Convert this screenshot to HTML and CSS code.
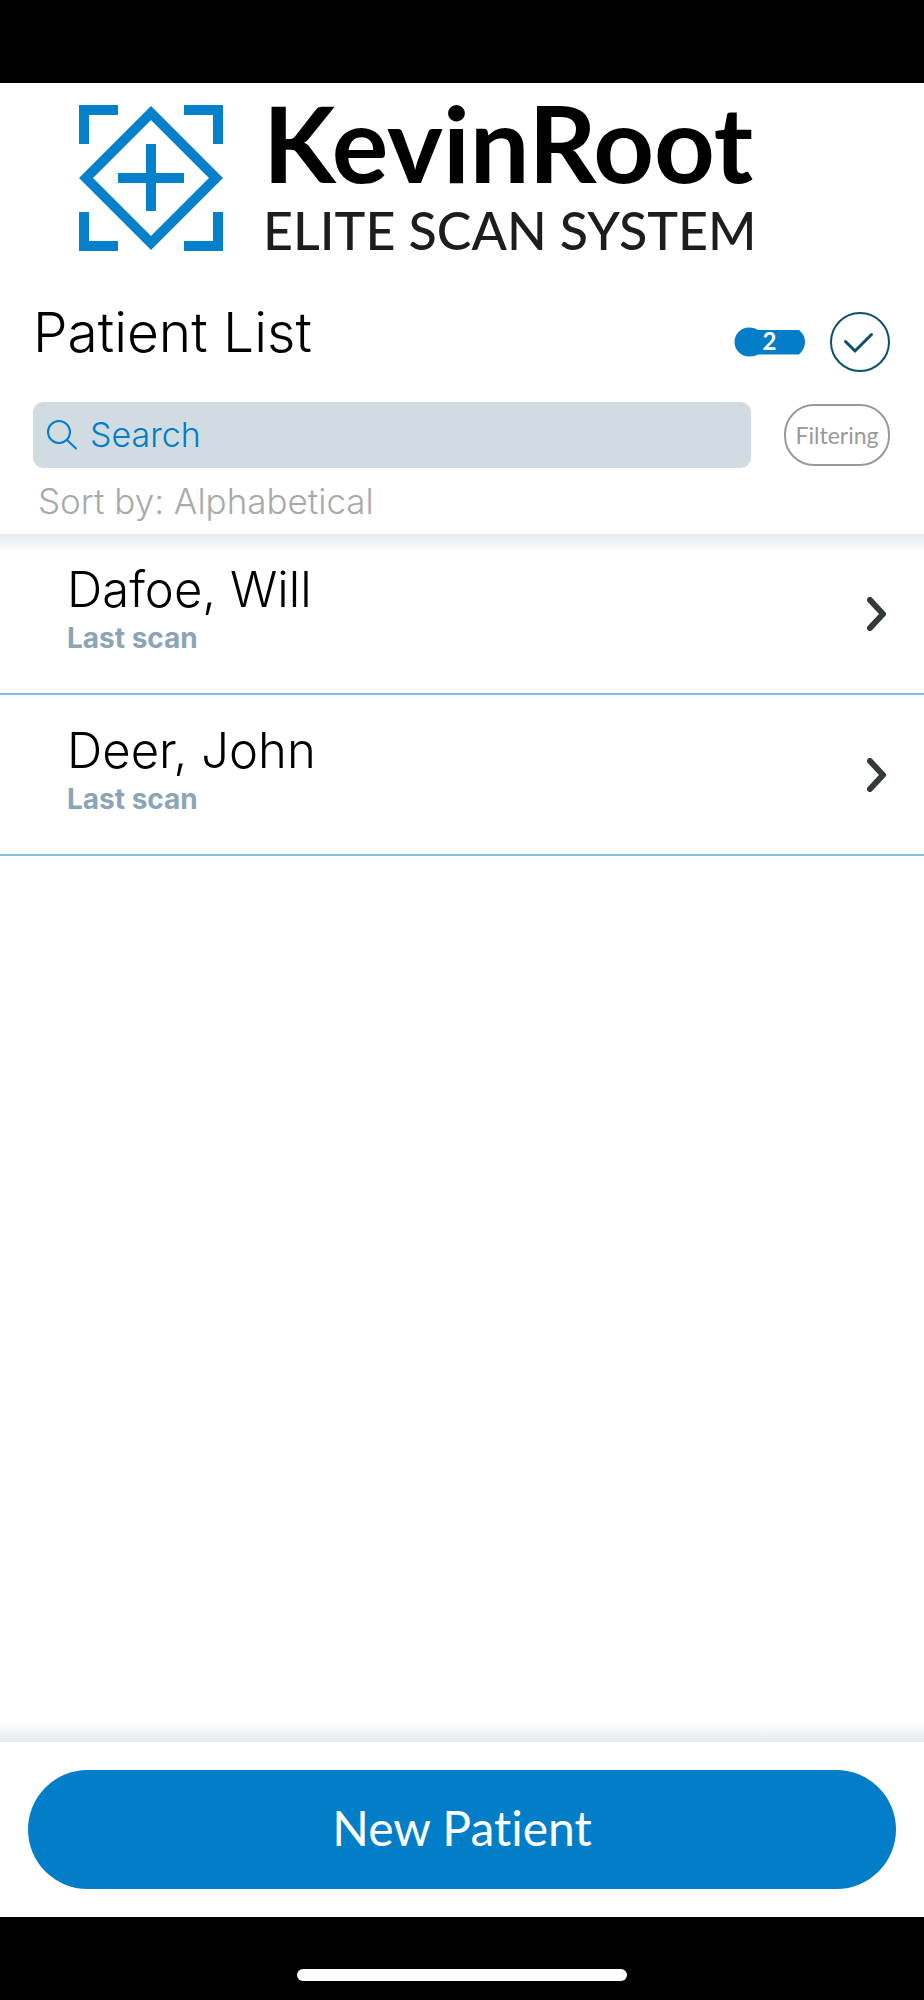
FILE: index.html
```html
<!DOCTYPE html>
<html lang="en">
<head>
<meta charset="utf-8">
<meta name="viewport" content="width=device-width, initial-scale=1">
<title>Patient List</title>
<link rel="stylesheet" href="styles.css">
</head>
<body>
<div class="status-bar"></div>
<header class="header">
  <div class="brand">
    <svg class="brand-mark" viewBox="0 0 144 146" aria-hidden="true">
      <g fill="none" stroke="#0580ca">
        <path stroke-width="10" d="M5 39V5H39M105 5H139V39M5 107V141H39M105 141H139V107M72 39V106M39 73H105"/>
        <path stroke-width="10" d="M72 8L137 73L72 138L7 73Z"/>
      </g>
    </svg>
    <div class="brand-text">
      <span class="brand-name">KevinRoot</span>
      <span class="brand-tag">ELITE SCAN SYSTEM</span>
    </div>
  </div>
  <div class="title-row">
    <h1 class="title">Patient List</h1>
    <div class="badge">
      <svg class="badge-shape" viewBox="0 0 71 30" aria-hidden="true">
        <path fill="#027dc7" d="M15 0.5C19 0.5 22 1.500 24 3H65Q71 8 71 15Q71 22 65 27.500H24C22 28.500 19 29.500 15 29.500A14.500 14.500 0 0 1 15 0.500Z"/>
      </svg>
      <span class="badge-count">2</span>
    </div>
    <button class="check" type="button" aria-label="Select patients">
      <svg viewBox="0 0 60 60" aria-hidden="true">
        <g fill="none" stroke="#0b4f6e" stroke-linecap="round">
          <circle cx="30" cy="30" r="29" stroke-width="2"/>
          <path stroke-width="3" d="M15.500 29.500L25 39L41.500 22.500"/>
        </g>
      </svg>
    </button>
  </div>
  <div class="search-row">
    <label class="search">
      <svg class="search-icon" viewBox="0 0 30 30" fill="none" stroke="#027dc7" stroke-width="2" stroke-linecap="round" aria-hidden="true">
        <circle cx="12" cy="12" r="11"/>
        <path d="M20 20L29 28.500"/>
      </svg>
      <input class="search-input" type="text" placeholder="Search" aria-label="Search">
    </label>
    <button class="filter" type="button">Filtering</button>
  </div>
  <div class="sort">Sort by: Alphabetical</div>
</header>
<main class="list">
  <a class="patient" href="#dafoe">
    <span class="patient-text">
      <span class="patient-name">Dafoe, Will</span>
      <span class="patient-scan">Last scan</span>
    </span>
    <svg class="chevron" viewBox="0 0 20 34" aria-hidden="true"><path d="M3 3L16 17L3 31"/></svg>
  </a>
  <a class="patient" href="#deer">
    <span class="patient-text">
      <span class="patient-name">Deer, John</span>
      <span class="patient-scan">Last scan</span>
    </span>
    <svg class="chevron" viewBox="0 0 20 34" aria-hidden="true"><path d="M3 3L16 17L3 31"/></svg>
  </a>
</main>
<footer class="footer">
  <button class="new-patient" type="button">New Patient</button>
</footer>
<div class="home-area"><div class="home-bar"></div></div>
</body>
</html>
```

FILE: styles.css
```css
* { box-sizing: border-box; }
body {
  margin: 0;
  min-height: 100vh;
  display: flex;
  flex-direction: column;
  background: #fff;
  color: #000;
  font-family: Inter, "Liberation Sans", sans-serif;
  font-weight: 300;
}
button { margin: 0; padding: 0; border: 0; background: none; cursor: pointer; }
.status-bar { height: 83px; background: #000; }

.header { padding: 0 34px 0 33px; }
.brand {
  display: flex;
  gap: 40px;
  padding: 22px 0 0 46px;
  font-family: Lato, sans-serif;
}
.brand-mark { width: 144px; height: 146px; flex: none; }
.brand-text { display: flex; flex-direction: column; white-space: nowrap; }
.brand-name { font-size: 106px; line-height: 74px; font-weight: 700; }
.brand-tag { margin-top: 20px; font-size: 52px; line-height: 62px; font-weight: 500; color: #1d1d1b; }

.title-row { display: flex; align-items: center; margin-top: 51px; }
.title { flex: 1; align-self: flex-start; margin: 0; font-size: 55px; line-height: 40px; font-weight: 300; }
.badge { position: relative; width: 71px; height: 30px; margin-right: 25px; }
.badge-shape { display: block; width: 100%; height: 100%; }
.badge-count {
  position: absolute;
  inset: 0;
  color: #fff;
  font: 700 24px/28px Lato, sans-serif;
  text-align: center;
}
.check { width: 60px; height: 60px; }
.check svg { display: block; }

.search-row { display: flex; align-items: center; gap: 33px; margin-top: 30px; }
.search {
  flex: 1;
  display: flex;
  align-items: center;
  gap: 13px;
  height: 66px;
  padding: 0 14px;
  border-radius: 10px;
  background: #d1dce2;
}
.search-icon { width: 30px; height: 30px; flex: none; }
.search-input {
  flex: 1;
  min-width: 0;
  padding: 0 0 2px;
  border: 0;
  outline: 0;
  background: none;
  color: #027dc7;
  font: inherit;
  font-size: 34px;
}
.search-input::placeholder { color: #027dc7; opacity: 1; }
.filter {
  width: 106px;
  height: 62px;
  border: 2px solid #999;
  border-radius: 30px;
  color: #999;
  font: 400 23px/28px Lato, sans-serif;
}
.sort { padding: 13px 5px; font-size: 35px; line-height: 40px; color: #a9a9a9; }

.list {
  flex: 1;
  background:
    linear-gradient(#e4ebef, #fff) top / 100% 20px no-repeat,
    linear-gradient(#fff, #e4ebef) bottom / 100% 20px no-repeat;
}
.patient {
  display: flex;
  align-items: center;
  justify-content: space-between;
  padding: 27px 37px 27px 67px;
  border-bottom: 2px solid #84c0e3;
  color: inherit;
  text-decoration: none;
}
.patient-text { display: flex; flex-direction: column; padding-bottom: 8px; }
.patient-name { font-size: 49px; line-height: 58px; }
.patient-scan { font-size: 28px; line-height: 39px; font-weight: 700; color: #8ba5b7; }
.chevron {
  width: 20px;
  height: 34px;
  fill: none;
  stroke: #343a3c;
  stroke-width: 6;
  stroke-linecap: round;
  stroke-linejoin: round;
}

.footer { padding: 28px; background: #fff; }
.new-patient {
  display: block;
  width: 100%;
  height: 119px;
  padding-bottom: 4px;
  border-radius: 60px;
  background: #027dc7;
  color: #fff;
  font: 400 48px/56px Lato, sans-serif;
  font-variant-ligatures: none;
}
.home-area { height: 83px; padding-top: 52px; background: #000; }
.home-bar { width: 36%; max-width: 330px; height: 12px; margin: 0 auto; border-radius: 6px; background: #fff; }
```
